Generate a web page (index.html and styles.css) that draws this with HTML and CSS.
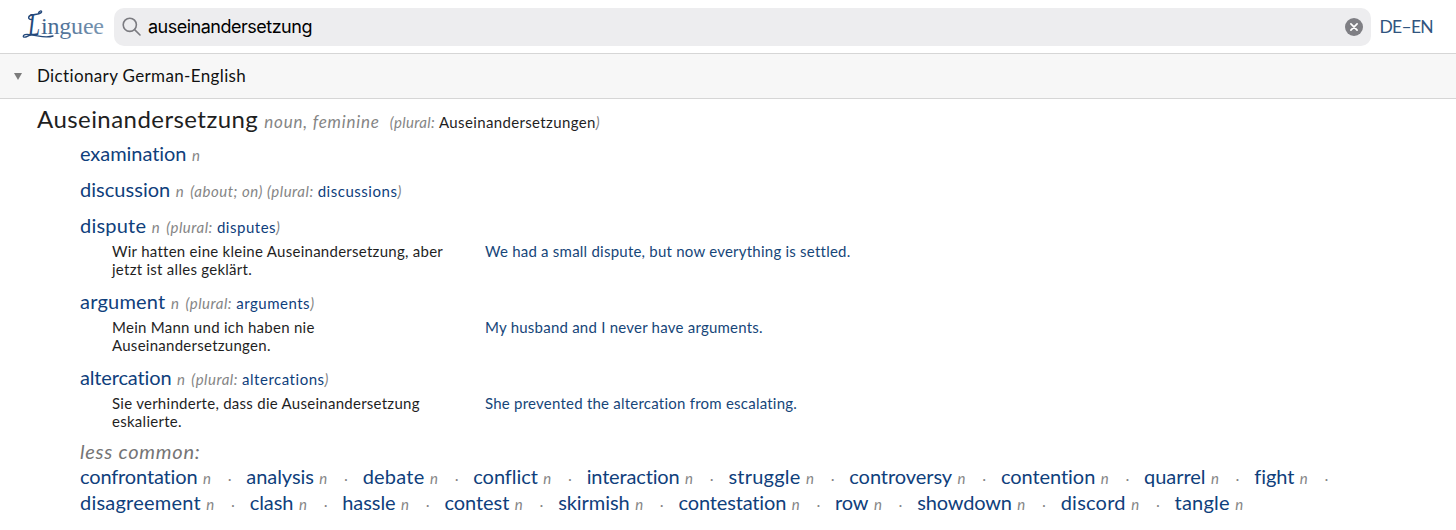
FILE: index.html
```html
<!DOCTYPE html>
<html lang="en">
<head>
<meta charset="utf-8">
<title>auseinandersetzung - Linguee</title>
<link rel="stylesheet" href="styles.css">
</head>
<body>
<header class="topbar">
  <svg class="logo" width="84" height="36" viewBox="0 0 84 36" role="img" aria-label="Linguee">
    <defs><linearGradient id="ink" x1="0" x2="1"><stop offset="0" stop-color="#3c608c"/><stop offset="1" stop-color="#7b98b3"/></linearGradient></defs>
    <text class="logo-initial" x="6" y="28" textLength="12" lengthAdjust="spacingAndGlyphs">L</text>
    <path class="logo-swash" d="M9.500 12.500C5 12 6 8.500 11 7.800C15 7.300 18 7 19.300 5.500C20.500 3.500 17.500 2.800 16 7M9 28C4 26.500 .5 28 1.500 29.800C4 31.500 6 27.500 10 28C16 28.500 23 31.500 31 29"/>
    <text class="logo-rest" x="19" y="27.300" textLength="63" lengthAdjust="spacing">inguee</text>
  </svg>
  <div class="search">
    <svg class="lens" width="20" height="20" viewBox="0 0 20 20"><circle cx="7.800" cy="7.800" r="6.600"/><path d="M12.600 12.600L18 18"/></svg>
    <span class="query">auseinandersetzung</span>
    <svg class="clear" width="18" height="18" viewBox="0 0 18 18"><circle cx="9" cy="9" r="9"/><path d="M5.900 5.900L12.100 12.100M12.100 5.900L5.900 12.100"/></svg>
  </div>
  <span class="lang">DE–EN</span>
</header>
<div class="section">
  <svg class="caret" width="8" height="7" viewBox="0 0 8 7"><path d="M0 0H8L4 7Z"/></svg>
  <span class="section-title">Dictionary German-English</span>
</div>
<main class="entry">
  <h1 class="lemma"><span class="headword">Auseinandersetzung</span><i class="wordtype">noun, feminine</i><span class="forms"><i>(plural: </i><span class="lemma-plural">Auseinandersetzungen</span><i>)</i></span></h1>
  <div class="translations">
    <div class="term"><a class="word">examination</a><i class="n">n</i></div>
    <div class="term"><a class="word even">discussion</a><i class="n">n</i><span class="note"><i>(about; on) (plural: </i><a>discussions</a><i>)</i></span></div>
    <div class="term with-example"><a class="word wide">dispute</a><i class="n">n</i><span class="note"><i>(plural: </i><a>disputes</a><i>)</i></span></div>
    <div class="example"><p class="source">Wir hatten eine kleine Auseinandersetzung, aber<br>jetzt ist alles geklärt.</p><p class="target">We had a small dispute, but now everything is settled.</p></div>
    <div class="term with-example"><a class="word wide">argument</a><i class="n">n</i><span class="note"><i>(plural: </i><a>arguments</a><i>)</i></span></div>
    <div class="example"><p class="source">Mein Mann und ich haben nie<br>Auseinandersetzungen.</p><p class="target">My husband and I never have arguments.</p></div>
    <div class="term with-example"><a class="word snug">altercation</a><i class="n">n</i><span class="note"><i>(plural: </i><a>altercations</a><i>)</i></span></div>
    <div class="example"><p class="source">Sie verhinderte, dass die Auseinandersetzung<br>eskalierte.</p><p class="target">She prevented the altercation from escalating.</p></div>
    <div class="less-title">less common:</div>
    <div class="less">
      <span class="item"><a class="word snug">confrontation</a><i class="n">n</i></span>
      <span class="item"><a class="word">analysis</a><i class="n">n</i></span>
      <span class="item"><a class="word wide">debate</a><i class="n">n</i></span>
      <span class="item"><a class="word">conflict</a><i class="n">n</i></span>
      <span class="item"><a class="word snug">interaction</a><i class="n">n</i></span>
      <span class="item"><a class="word wide">struggle</a><i class="n">n</i></span>
      <span class="item"><a class="word">controversy</a><i class="n">n</i></span>
      <span class="item"><a class="word">contention</a><i class="n">n</i></span>
      <span class="item"><a class="word">quarrel</a><i class="n">n</i></span>
      <span class="item"><a class="word">fight</a><i class="n">n</i></span>
      <span class="item"><a class="word wide">disagreement</a><i class="n">n</i></span>
      <span class="item"><a class="word">clash</a><i class="n">n</i></span>
      <span class="item"><a class="word">hassle</a><i class="n">n</i></span>
      <span class="item"><a class="word">contest</a><i class="n">n</i></span>
      <span class="item"><a class="word">skirmish</a><i class="n">n</i></span>
      <span class="item"><a class="word snug">contestation</a><i class="n">n</i></span>
      <span class="item"><a class="word snug">row</a><i class="n">n</i></span>
      <span class="item"><a class="word snug">showdown</a><i class="n">n</i></span>
      <span class="item"><a class="word wide">discord</a><i class="n">n</i></span>
      <span class="item last"><a class="word wide">tangle</a><i class="n">n</i></span>
    </div>
  </div>
</main>
</body>
</html>
```
FILE: styles.css
```css
* { box-sizing: border-box; }
body { margin: 0; height: 530px; overflow: hidden; background: #fff; color: #1f1f1f; font-family: Lato, "Open Sans", sans-serif; white-space: nowrap; }
p, h1 { margin: 0; font-weight: 400; }
a { color: #0f407c; }
.topbar { display: flex; align-items: center; height: 54px; padding-left: 22px; border-bottom: 1px solid #d6d6d6; }
.logo { flex: none; margin-top: -3px; overflow: visible; }
.logo text { font-family: "Liberation Serif", serif; }
.logo-initial { fill: #24497b; font-size: 32px; font-style: italic; }
.logo-rest { fill: url(#ink); font-size: 24px; }
.logo-swash { fill: none; stroke: #24497b; stroke-width: 1.4; stroke-linecap: round; }
.search { display: flex; align-items: center; width: 1257px; height: 38px; margin-left: 8px; padding: 0 8px; border-radius: 10px; background: #ededef; }
.lens { fill: none; stroke: #7b7b80; stroke-width: 1.6; stroke-linecap: round; }
.query { flex: 1; margin-left: 6px; color: #000; font-family: Inter, sans-serif; font-size: 18px; letter-spacing: -.5px; }
.clear { fill: #7f7f84; }
.clear path { stroke: #fff; stroke-width: 1.7; stroke-linecap: round; }
.lang { margin-left: 8.5px; color: #31557f; font-size: 17.5px; letter-spacing: -.7px; }
.section { display: flex; align-items: center; height: 45px; padding-left: 14px; border-bottom: 1px solid #d6d6d6; background: #f7f7f7; }
.caret { fill: #7c7c7c; }
.section-title { margin: -2px 0 0 15px; color: #111; font-size: 17px; letter-spacing: .36px; }
.entry { padding-left: 37px; }
.lemma { display: flex; align-items: baseline; height: 37px; line-height: 40px; }
.headword { font-size: 24px; letter-spacing: .44px; }
.wordtype { margin-left: 6px; font-size: 17px; color: #858585; letter-spacing: .8px; }
.forms { margin-left: 10px; font-size: 15px; letter-spacing: .36px; }
.forms i, .note i { color: #858585; font-weight: 400; white-space: pre; }
.translations { padding-left: 43px; }
.term { display: flex; align-items: baseline; height: 36px; line-height: 35px; }
.term.with-example { height: 34px; line-height: 35px; }
.word { font-size: 20px; letter-spacing: -.06px; }
.word.snug { letter-spacing: -.15px; }
.word.even { letter-spacing: .03px; }
.word.wide { letter-spacing: .22px; }
.n { margin-left: 5.5px; color: #858585; font-size: 15px; }
.note { margin-left: 6.5px; font-size: 15px; letter-spacing: .52px; }
.example { display: grid; grid-template-columns: 373px 1fr; height: 42px; padding-left: 32px; font-size: 15px; line-height: 18px; }
.source { letter-spacing: .27px; }
.target { color: #164679; letter-spacing: .23px; }
.less-title { height: 27px; padding-top: 4px; line-height: 22px; color: #757575; font-size: 20px; font-style: italic; letter-spacing: .75px; }
.less { display: flex; flex-wrap: wrap; }
.item { display: flex; align-items: baseline; height: 26px; line-height: 26px; }
.item::after { content: "·"; width: 33.4px; padding-left: 2px; color: #858585; font-size: 13px; text-align: center; }
.item.last::after { content: none; }
```
